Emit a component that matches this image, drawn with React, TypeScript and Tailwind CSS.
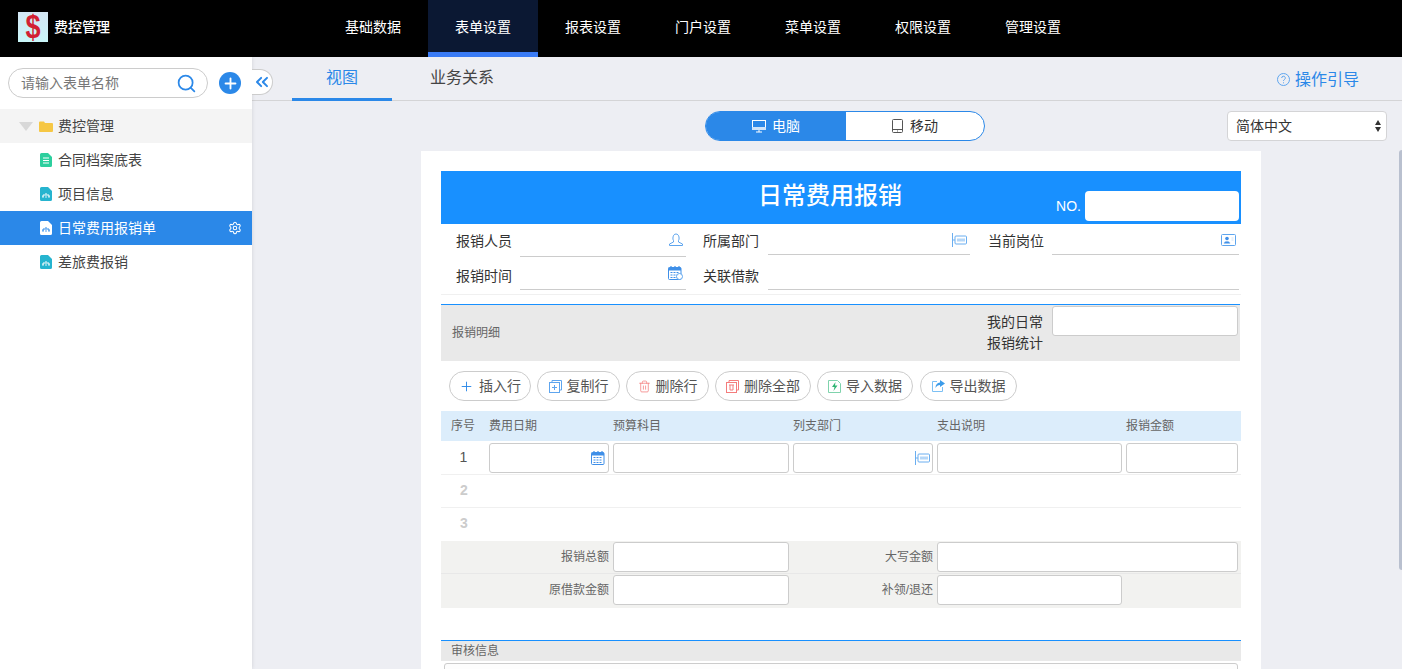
import type { ReactNode } from "react";
import { ChevronsLeft, Plus, Search, Settings, Trash2 } from "lucide-react";

const font = "font-['Liberation_Sans','Noto_Sans_CJK_SC',sans-serif]";
const navItems = ["基础数据", "表单设置", "报表设置", "门户设置", "菜单设置", "权限设置", "管理设置"];

function SheetIcon({ color, tree }: { color: string; tree?: boolean }) {
  return (
    <svg width="12" height="14" viewBox="0 0 12 14" className="shrink-0">
      <path d="M1.500 0H8l4 4v8.500a1.500 1.500 0 0 1-1.500 1.500h-9A1.500 1.500 0 0 1 0 12.500v-11A1.500 1.500 0 0 1 1.500 0z" fill={color} />
      {tree ? (
        <path d="M6 6v1.500M3 10V8h6v2M2.200 10h1.600M5.200 10h1.600M8.200 10h1.600" fill="none" stroke={color === "#fff" ? "#2b88e8" : "#fff"} strokeWidth="1" />
      ) : (
        <path d="M3 5h6M3 7.500h6M3 10h6" fill="none" stroke="#fff" strokeWidth="1" />
      )}
    </svg>
  );
}

function DeptIcon() {
  return (
    <svg width="15" height="14" viewBox="0 0 15 14" fill="none" stroke="#6aaef0" strokeWidth="1">
      <path d="M.5 0v14" />
      <path d="M.5 7H3" />
      <rect x="3" y="3" width="11.500" height="8" rx="1" />
      <path d="M6 5.500v3M8 5.500v3M10 5.500v3M12 5.500v3" />
    </svg>
  );
}

function CalendarIcon({ badge }: { badge?: boolean }) {
  return (
    <svg width="15" height="14" viewBox="0 0 15 14">
      <path d="M3 0v2M7 0v2M11 0v2" stroke="#3f8fe8" strokeWidth="1.200" />
      <rect x="0.500" y="1.500" width="12.500" height="12" rx="1" fill="none" stroke="#3f8fe8" />
      <rect x="0.500" y="1.500" width="12.500" height="3" fill="#3f8fe8" />
      <path d="M2.500 6.500h8.500M2.500 9h8.500M2.500 11.500h8.500" stroke="#3f8fe8" strokeDasharray="2 1" />
      {badge && <circle cx="11.500" cy="10.500" r="3" fill="#fff" stroke="#5ea5ee" />}
    </svg>
  );
}

function Field({ label, labelTop = "pt-[7px]", labelW, lineW, line, icon }: { label: string; labelTop?: string; labelW: string; lineW: string; line: string; icon?: ReactNode }) {
  return (
    <div className="flex">
      <div className={`${labelW} ${labelTop} text-sm leading-5 text-[#333]`}>{label}</div>
      <div className={`${lineW} ${line} flex justify-end border-b border-[#ccc] pt-[9px] pr-[3px]`}>{icon}</div>
    </div>
  );
}

function Box({ className = "", children }: { className?: string; children?: ReactNode }) {
  return <div className={`h-[30px] rounded-[3px] border border-[#ccc] bg-white ${className}`}>{children}</div>;
}

function Tool({ icon, label, className }: { icon: ReactNode; label: string; className: string }) {
  return (
    <button className={`flex h-[30px] items-center justify-center gap-[5px] rounded-full border border-[#ccc] bg-white text-sm text-[#555] ${className}`}>
      {icon}
      {label}
    </button>
  );
}

export default function App() {
  return (
    <div className={`${font} flex h-[669px] w-[1402px] flex-col overflow-hidden bg-[#edeef3]`}>
      <header className="flex h-[57px] shrink-0 bg-black">
        <div className="flex w-[318px] items-start pt-3 pl-[18px]">
          <div className="flex h-[30px] w-[30px] items-center justify-center bg-gradient-to-b from-[#d4e6f4] to-[#c9f6f9] text-[27px] leading-[30px] font-bold text-[#d21f33]">
            <span className="scale-y-125">$</span>
          </div>
          <span className="ml-1.5 text-sm leading-[30px] font-medium text-white">费控管理</span>
        </div>
        {navItems.map((item) => (
          <div
            key={item}
            className={`flex w-[110px] items-center justify-center text-sm text-white ${item === "表单设置" ? "border-b-[5px] border-[#3a7bf5] bg-[#0b1833] pt-px" : "pb-1"}`}
          >
            {item}
          </div>
        ))}
      </header>

      <div className="relative flex min-h-0 flex-1">
        <aside className="relative z-10 w-[252px] shrink-0 bg-white shadow-[0_0_4px_rgba(0,0,0,0.12)]">
          <div className="flex items-center px-2 py-[11px]">
            <div className="flex h-[30px] w-[200px] items-center justify-between rounded-full border border-[#ccc] pr-[10px] pl-3 text-sm text-[#777]">
              请输入表单名称
              <Search size={21} strokeWidth={2} color="#2b88e8" />
            </div>
            <div className="ml-[11px] flex h-[22px] w-[22px] items-center justify-center rounded-full bg-[#2b88e8]">
              <Plus size={17} strokeWidth={2.6} color="#fff" />
            </div>
          </div>
          <div className="flex h-[34px] items-center bg-[#f4f4f4] pl-[19px] text-sm text-[#444]">
            <span className="h-0 w-0 border-x-[7px] border-t-[9px] border-x-transparent border-t-[#d8d8d8]" />
            <svg width="14" height="11" viewBox="0 0 14 11" className="mr-[5px] ml-[6px]">
              <path d="M0 1.500A1 1 0 0 1 1 .5h4l1 1.500h7a1 1 0 0 1 1 1V10a1 1 0 0 1-1 1H1a1 1 0 0 1-1-1z" fill="#f6c744" />
            </svg>
            费控管理
          </div>
          <div className="flex h-[34px] items-center gap-[6px] pl-10 text-sm text-[#444]">
            <SheetIcon color="#2dcf9e" />
            合同档案底表
          </div>
          <div className="flex h-[34px] items-center gap-[6px] pl-10 text-sm text-[#444]">
            <SheetIcon color="#26b4cf" tree />
            项目信息
          </div>
          <div className="flex h-[34px] items-center gap-[6px] bg-[#2b88e8] pl-10 text-sm text-white">
            <SheetIcon color="#fff" tree />
            <span className="flex-1">日常费用报销单</span>
            <Settings size={14} strokeWidth={1.8} className="mr-[10px]" />
          </div>
          <div className="flex h-[34px] items-center gap-[6px] pl-10 text-sm text-[#444]">
            <SheetIcon color="#26b4cf" tree />
            差旅费报销
          </div>
        </aside>

        <div className="absolute top-[12px] left-[252px] z-20 flex h-[26px] w-[21px] items-center justify-center rounded-r-full border border-l-0 border-[#ccc] bg-white">
          <ChevronsLeft size={20} strokeWidth={2.4} color="#2b88e8" />
        </div>

        <main className="min-w-0 flex-1">
          <div className="flex h-[44px] border-b border-[#d4d4d6] pl-10">
            <div className="-mb-px flex h-[44px] w-[100px] items-center justify-center border-b-[3px] border-[#2b88e8] text-base text-[#2b88e8]">视图</div>
            <div className="ml-[38px] flex items-center pb-[1px] text-base text-[#444]">业务关系</div>
            <div className="mr-[43px] ml-auto flex items-center gap-[5px] pt-[2px] text-base text-[#2b88e8]">
              <svg width="13" height="13" viewBox="0 0 13 13" fill="none" stroke="#5ea5ee">
                <circle cx="6.500" cy="6.500" r="6" />
                <path d="M4.700 5a1.800 1.800 0 1 1 2.600 1.600c-.6.400-.8.700-.8 1.400M6.500 9.300v1" />
              </svg>
              操作引导
            </div>
          </div>

          <div className="flex items-center pt-[10px] pl-[453px]">
            <div className="flex h-[30px] w-[280px] overflow-hidden rounded-full border border-[#2b88e8] bg-white text-sm">
              <div className="flex w-[140px] items-center justify-center gap-[6px] bg-[#2b88e8] text-white">
                <svg width="14" height="14" viewBox="0 0 14 14">
                  <rect x="0.500" y="1.500" width="13" height="9" fill="none" stroke="#fff" />
                  <rect y="8" width="14" height="3" fill="#cfe4fa" />
                  <path d="M7 11v2M4 13h6" stroke="#fff" />
                </svg>
                电脑
              </div>
              <div className="flex flex-1 items-center justify-center gap-[7px] text-[#333]">
                <svg width="11" height="14" viewBox="0 0 11 14" fill="none" stroke="#555">
                  <rect x="0.500" y="0.500" width="10" height="13" rx="1" />
                  <path d="M.5 10.500h10M5.500 11.500v1" />
                </svg>
                移动
              </div>
            </div>
            <div className="ml-[242px] flex h-[30px] w-[160px] items-center justify-between rounded-[4px] border border-[#d4d4d6] bg-white pr-[5px] pl-2 text-sm text-[#333]">
              简体中文
              <span className="flex flex-col gap-[2px]">
                <span className="h-0 w-0 border-x-[3.5px] border-b-[5px] border-x-transparent border-b-[#333]" />
                <span className="h-0 w-0 border-x-[3.5px] border-t-[5px] border-x-transparent border-t-[#333]" />
              </span>
            </div>
          </div>

          <section className="mt-[10px] ml-[169px] w-[840px] bg-white px-5 pt-5">
            <div className="flex h-[53px] bg-[#1890ff]">
              <h1 className="w-[730px] pl-[48px] text-center text-2xl leading-[50px] font-medium text-white">日常费用报销</h1>
            </div>
            <div className="-mt-[33px] mb-[3px] flex h-[30px] items-center justify-end pr-[2px]">
              <span className="mr-1 text-sm text-white">NO.</span>
              <div className="h-[30px] w-[154px] rounded-[4px] bg-white" />
            </div>

            <div className="pl-[15px]">
              <div className="flex h-[33px]">
                <Field
                  label="报销人员"
                  labelW="w-[64px]"
                  lineW="w-[166px]"
                  line="h-[33px]"
                  icon={
                    <svg width="14" height="13" viewBox="0 0 14 13" fill="none" stroke="#5ea5ee">
                      <path d="M4.500 7.500C3.500 6.500 3.500 1 7 1s3.500 5.500 2.500 6.500v1.500l4 2v1.500H.5V11l4-2z" />
                    </svg>
                  }
                />
                <div className="ml-[17px]">
                  <Field label="所属部门" labelW="w-[65px]" lineW="w-[202px]" line="h-[31px]" icon={<DeptIcon />} />
                </div>
                <div className="ml-[18px]">
                  <Field
                    label="当前岗位"
                    labelW="w-[64px]"
                    lineW="w-[187px]"
                    line="h-[31px]"
                    icon={
                      <svg width="15" height="12" viewBox="0 0 15 12" className="mt-[1px]">
                        <rect x="0.500" y="0.500" width="14" height="11" rx="1" fill="#fff" stroke="#5ea5ee" />
                        <circle cx="6" cy="4.500" r="1.800" fill="#3f8fe8" />
                        <path d="M3 9.500c0-3 6-3 6 0zM10.500 4h2M10.500 6h2" fill="#3f8fe8" stroke="#9cc7f3" strokeWidth=".5" />
                      </svg>
                    }
                  />
                </div>
              </div>
              <div className="flex h-[33px]">
                <Field label="报销时间" labelTop="pt-[9px]" labelW="w-[64px]" lineW="w-[166px]" line="h-[33px]" icon={<CalendarIcon badge />} />
                <div className="ml-[17px]">
                  <Field label="关联借款" labelTop="pt-[9px]" labelW="w-[65px]" lineW="w-[471px]" line="h-[33px]" />
                </div>
              </div>
            </div>
            <div className="mt-[4px] h-px bg-[#f0f0f0]" />

            <div className="mt-[9px] flex h-[57px] w-[799px] items-center border-t border-t-[#1890ff] bg-[#e9e9e9] pl-[11px] text-xs text-[#666]">
              <span className="flex-1">报销明细</span>
              <div className="w-[56px] text-sm leading-[21px] text-[#333]">我的日常报销统计</div>
              <Box className="mt-[1px] mr-[2px] ml-[9px] w-[186px] self-start" />
            </div>

            <div className="flex gap-[6px] pt-[10px] pl-2">
              <Tool className="w-[82px]" label="插入行" icon={<Plus size={15} strokeWidth={1.5} color="#2b88e8" />} />
              <Tool
                className="w-[83px]"
                label="复制行"
                icon={
                  <svg width="13" height="13" viewBox="0 0 13 13" fill="none" stroke="#5ea5ee">
                    <path d="M3 2.500V.5h9.500V10h-1.500" />
                    <rect x="0.500" y="2.500" width="10" height="10" />
                    <path d="M5.500 5v5M3 7.500h5" />
                  </svg>
                }
              />
              <Tool className="w-[83px]" label="删除行" icon={<Trash2 size={13} strokeWidth={1.4} color="#f47c7c" />} />
              <Tool
                className="w-[96px]"
                label="删除全部"
                icon={
                  <svg width="13" height="13" viewBox="0 0 13 13" fill="none" stroke="#f47c7c">
                    <path d="M3 2V.5h9.500V10H11" />
                    <rect x="0.500" y="2.500" width="10" height="10" />
                    <path d="M3 5h5M4 5v5h3V5" />
                  </svg>
                }
              />
              <Tool
                className="w-[96px]"
                label="导入数据"
                icon={
                  <svg width="13" height="13" viewBox="0 0 13 13">
                    <path d="M.5.5h9l3 3v9H.5z" fill="none" stroke="#7fd3ac" />
                    <path d="M7.500 2 4 7h2.500L5.500 11 9.500 5.500H7z" fill="#2fb573" />
                  </svg>
                }
              />
              <Tool
                className="ml-px w-[97px]"
                label="导出数据"
                icon={
                  <svg width="13" height="12" viewBox="0 0 13 12">
                    <path d="M5 1.500H.5v10h10V7" fill="none" stroke="#7cc0f4" />
                    <path d="M8 0l5 3.500L8 7V5C6 5 4.500 6 3.500 8c0-3.500 1.500-5 4.500-5.500z" fill="#3c9cea" />
                  </svg>
                }
              />
            </div>

            <div className="mt-[10px] grid h-[30px] grid-cols-[48px_124px_180px_144px_189px_115px] items-center bg-[#dcedfb] text-xs text-[#666]">
              <span className="pl-[10px]">序号</span>
              <span>费用日期</span>
              <span>预算科目</span>
              <span>列支部门</span>
              <span>支出说明</span>
              <span>报销金额</span>
            </div>
            <div className="grid h-[34px] grid-cols-[48px_124px_180px_144px_189px_115px] items-center border-b border-[#f0f0f0]">
              <span className="pr-[3px] pb-[2px] text-center text-sm text-[#555]">1</span>
              <Box className="mr-1 flex items-center justify-end pr-[2px]">
                <CalendarIcon />
              </Box>
              <Box className="mr-1" />
              <Box className="mr-1 flex items-center justify-end pr-[2px]">
                <DeptIcon />
              </Box>
              <Box className="mr-1" />
              <Box className="mr-[3px]" />
            </div>
            <div className="flex h-[33px] items-center border-b border-[#f0f0f0] pb-[2px] pl-[19px] text-sm font-bold text-[#ccc]">2</div>
            <div className="flex h-[33px] items-center pb-[3px] pl-[19px] text-sm font-bold text-[#ccc]">3</div>
            <div className="flex h-[33px] items-center border-b border-[#e8e8e8] bg-[#f2f2f0] pb-px text-xs text-[#666]">
              <span className="w-[168px] text-right">报销总额</span>
              <Box className="ml-1 w-[176px]" />
              <span className="w-[144px] text-right">大写金额</span>
              <Box className="ml-1 w-[301px]" />
            </div>
            <div className="flex h-[34px] items-center bg-[#f2f2f0] pb-[3px] text-xs text-[#666]">
              <span className="w-[168px] text-right">原借款金额</span>
              <Box className="ml-1 w-[176px]" />
              <span className="w-[144px] text-right">补领/退还</span>
              <Box className="ml-1 w-[185px]" />
            </div>

            <div className="mt-[32px] h-[21px] border-t border-t-[#1890ff] bg-[#e9e9e9] pl-[10px] text-xs leading-5 text-[#666]">审核信息</div>
            <div className="mx-[3px] mt-[2px] h-[30px] rounded-[3px] border border-[#ccc] bg-[#fdfdfd]" />
          </section>
        </main>

        <div className="absolute top-[93px] right-0 h-[420px] w-[3px] rounded-l-sm bg-[#b9c0cf]" />
      </div>
    </div>
  );
}
